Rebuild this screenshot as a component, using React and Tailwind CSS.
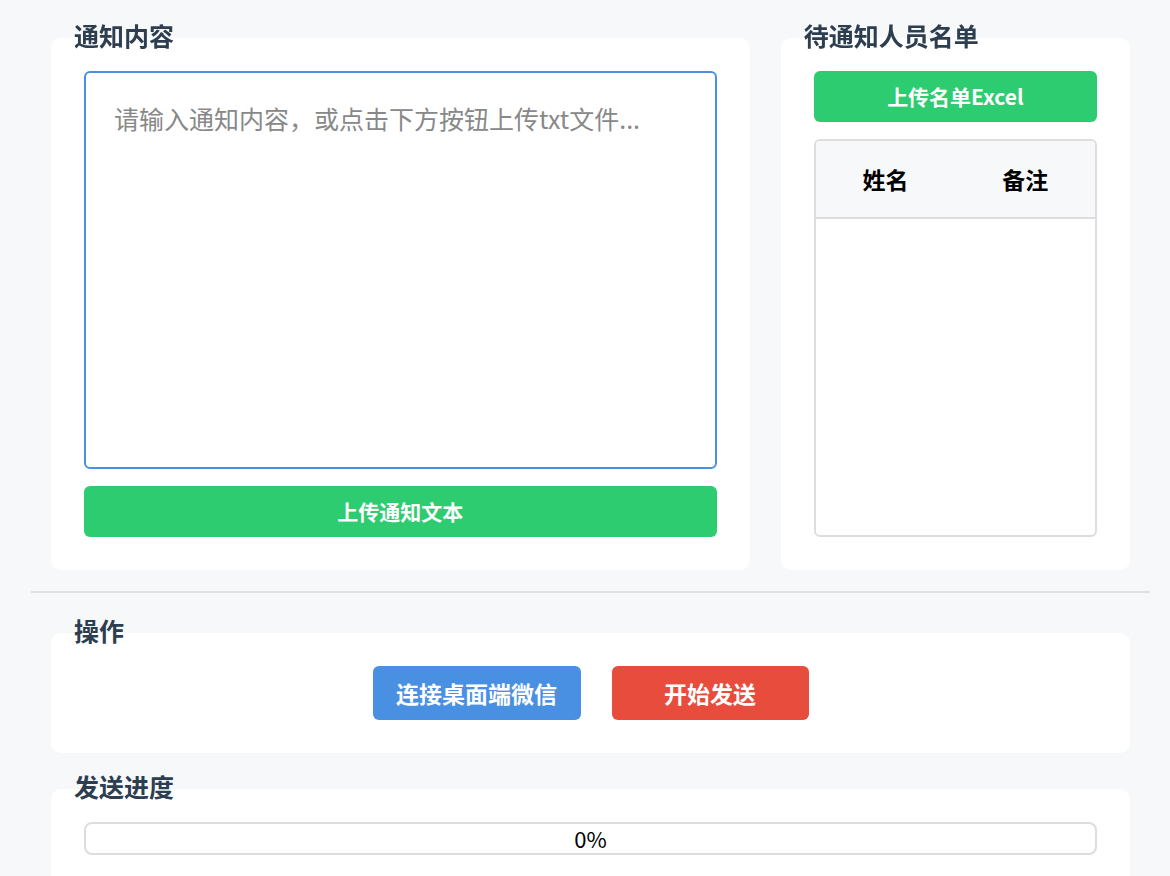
import { useState } from "react";

const font = { fontFamily: '"Noto Sans CJK SC", "Noto Sans", sans-serif' };

const Section = ({ title, className = "", children }) => (
    <div className={"flex flex-col " + className}>
        <div className="relative z-10 ml-[23px] text-[25px] leading-[32px] font-bold text-[#2c3e50]">{title}</div>
        <div className="-mt-[13px] flex-1 bg-white rounded-[10px] p-[33px]">{children}</div>
    </div>
);

const App = () => {
    const [content, setContent] = useState("");
    const [people] = useState([]);
    const [progress] = useState(0);

    return (
        <div className="min-h-screen bg-[#f7f8fa] pl-[31px] pr-[20px] pt-[19px]" style={font}>
            <div className="mx-[20px] flex gap-[31px]">
                <Section title="通知内容" className="flex-[2]">
                    <textarea
                        autoFocus
                        value={content}
                        onChange={(e) => setContent(e.target.value)}
                        placeholder="请输入通知内容，或点击下方按钮上传txt文件..."
                        className="block w-full h-[398px] resize-none rounded-[6px] border-2 border-[#4a90e2] px-[28px] py-[27px] text-[25px] leading-[1.5] text-[#333] placeholder:text-[#888] outline-none"
                    />
                    <button className="mt-[17px] w-full h-[51px] rounded-[6px] bg-[#2ecc71] text-white text-[21px] font-bold">
                        上传通知文本
                    </button>
                </Section>

                <Section title="待通知人员名单" className="flex-1">
                    <div className="flex flex-col h-full">
                        <button className="w-full h-[51px] rounded-[6px] bg-[#2ecc71] text-white text-[21px] font-bold">
                            上传名单Excel
                        </button>
                        <div className="mt-[17px] flex-1 rounded-[6px] border-2 border-[#dddddd] overflow-hidden">
                            <table className="w-full table-fixed">
                                <thead className="bg-[#f7f8fa]">
                                    <tr className="border-b-2 border-[#dddddd]">
                                        <th className="h-[77px] text-[23px] font-bold text-black">姓名</th>
                                        <th className="h-[77px] text-[23px] font-bold text-black">备注</th>
                                    </tr>
                                </thead>
                                <tbody>
                                    {people.map((p, i) => (
                                        <tr key={i}>
                                            <td className="py-2 text-center">{p.name}</td>
                                            <td className="py-2 text-center">{p.note}</td>
                                        </tr>
                                    ))}
                                </tbody>
                            </table>
                        </div>
                    </div>
                </Section>
            </div>

            <div className="mt-[21px] mb-[21px] h-[2px] bg-[#dddfe3]" />

            <Section title="操作" className="mx-[20px]">
                <div className="flex justify-center gap-[31px]">
                    <button className="w-[208px] h-[54px] rounded-[6px] bg-[#4a90e2] text-white text-[23px] font-bold">
                        连接桌面端微信
                    </button>
                    <button className="w-[197px] h-[54px] rounded-[6px] bg-[#e74c3c] text-white text-[23px] font-bold">
                        开始发送
                    </button>
                </div>
            </Section>

            <Section title="发送进度" className="mx-[20px] mt-[17px]">
                <div className="relative h-[33px] rounded-[8px] border-2 border-[#dddddd] overflow-hidden">
                    <div className="absolute inset-y-0 left-0 bg-[#2ecc71]" style={{ width: progress + "%" }} />
                    <div className="relative flex h-full items-center justify-center text-[22px] text-black">{progress}%</div>
                </div>
            </Section>
        </div>
    );
};

export default App;
